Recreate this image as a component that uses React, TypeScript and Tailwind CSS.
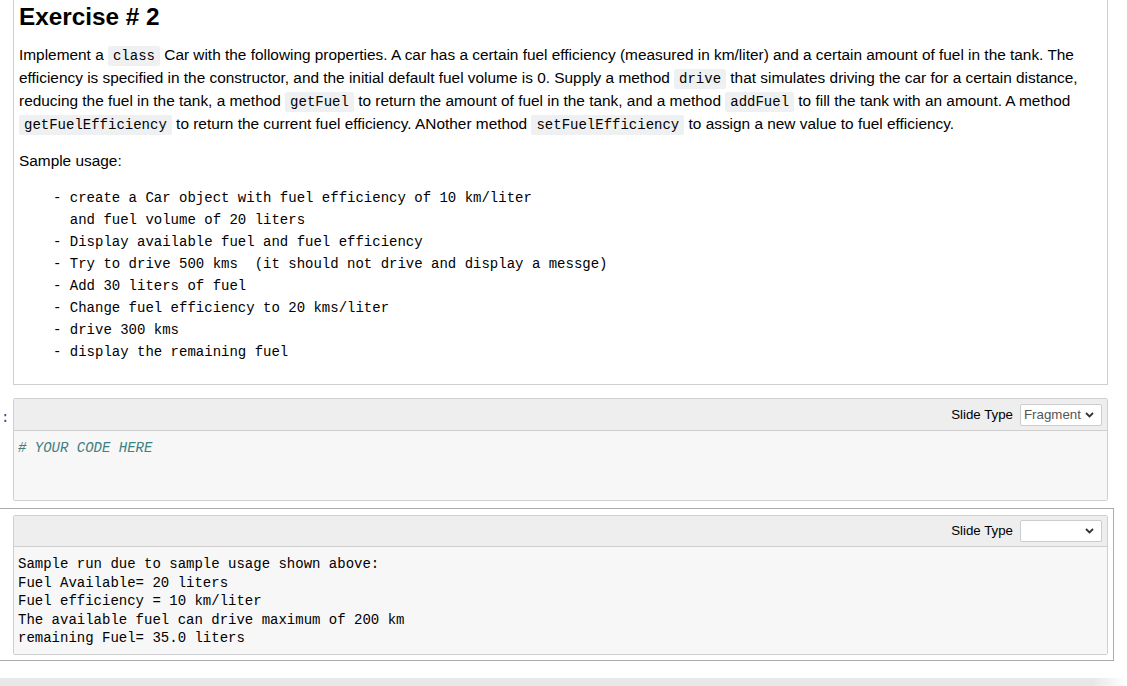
import React from "react";

const mono = "font-['Liberation_Mono','DejaVu_Sans_Mono',monospace]";

function Code({ children }: { children: React.ReactNode }) {
  return (
    <code className={`${mono} rounded-[2px] bg-[#eff0f1] px-[5px] py-[2px] text-[14px]`}>
      {children}
    </code>
  );
}

function SlideType({ value }: { value: string }) {
  return (
    <div className="flex h-full items-center justify-end pr-[5px] text-[13.3px]">
      <span className="mr-[7px] text-black">Slide Type</span>
      <div className="flex h-[22px] w-[82px] items-center justify-between rounded-[2px] border border-[#cccccc] bg-white pl-[3px] pr-[7px] text-[#555555]">
        <span>{value}</span>
        <svg width="9" height="6" viewBox="0 0 9 6" fill="none">
          <path d="M1 1l3.5 3.5L8 1" stroke="#333" strokeWidth="1.8" />
        </svg>
      </div>
    </div>
  );
}

const usage = [
  "- create a Car object with fuel efficiency of 10 km/liter",
  "  and fuel volume of 20 liters",
  "- Display available fuel and fuel efficiency",
  "- Try to drive 500 kms  (it should not drive and display a messge)",
  "- Add 30 liters of fuel",
  "- Change fuel efficiency to 20 kms/liter",
  "- drive 300 kms",
  "- display the remaining fuel",
];

const sampleRun = [
  "Sample run due to sample usage shown above:",
  "Fuel Available= 20 liters",
  "Fuel efficiency = 10 km/liter",
  "The available fuel can drive maximum of 200 km",
  "remaining Fuel= 35.0 liters",
];

export default function App() {
  return (
    <div className="h-[686px] w-[1127px] overflow-hidden bg-white font-['Liberation_Sans',Arial,sans-serif] text-black">
      <div className="pr-[13px]">
        {/* markdown cell */}
        <div className="border-b border-r border-transparent pb-[5px] pl-[13px] pr-[5px]">
          <div className="h-[385px] border-x border-b border-[#cfcfcf] pl-[5px]">
            <h2 className="pt-[4px] text-[24.3px] font-bold leading-[26.4px]">Exercise # 2</h2>
            <p className="mt-[14px] whitespace-nowrap text-[15.4px] leading-[22px]">
              Implement a <Code>class</Code> Car with the following properties. A car has a certain fuel
              efficiency (measured in km/liter) and a certain amount of fuel in the tank. The
              <br />
              efficiency is specified in the constructor, and the initial default fuel volume is 0. Supply a
              method <Code>drive</Code> that simulates driving the car for a certain distance,
              <br />
              reducing the fuel in the tank, a method <Code>getFuel</Code> to return the amount of fuel in
              the tank, and a method <Code>addFuel</Code> to fill the tank with an amount. A method
              <br />
              <Code>getFuelEfficiency</Code> to return the current fuel efficiency. ANother method{" "}
              <Code>setFuelEfficiency</Code> to assign a new value to fuel efficiency.
            </p>
            <p className="mt-[14px] text-[15.4px] leading-[22px]">Sample usage:</p>
            <pre className={`${mono} ml-[34px] mt-[15px] text-[14px] leading-[22px]`}>
              {usage.join("\n")}
            </pre>
          </div>
        </div>

        {/* code cell */}
        <div className="mt-[1px] flex border-y border-r border-transparent pb-[5px] pr-[5px] pt-[5px]">
          <div className="w-[13px] shrink-0 pl-[1px] pt-[7px]">
            <span className={`${mono} text-[14px] leading-[18px] text-[#303f9f]`}>:</span>
          </div>
          <div className="flex-1 rounded-[2px] border border-[#cfcfcf]">
            <div className="h-[32px] border-b border-[#cfcfcf] bg-[#eeeeee]">
              <SlideType value="Fragment" />
            </div>
            <div className="h-[69px] bg-[#f7f7f7] pl-[4px] pt-[8px]">
              <div className={`${mono} text-[14px] italic leading-[18.5px] text-[#408080]`}>
                # YOUR CODE HERE
              </div>
            </div>
          </div>
        </div>

        {/* selected raw cell */}
        <div className="mt-[1px] flex border-y border-r border-[#ababab] pb-[5px] pr-[5px] pt-[6px]">
          <div className="w-[13px] shrink-0" />
          <div className="flex-1 rounded-[2px] border border-[#cfcfcf]">
            <div className="h-[31px] border-b border-[#cfcfcf] bg-[#eeeeee]">
              <SlideType value="" />
            </div>
            <div className="h-[107px] bg-[#f7f7f7] pl-[4px] pt-[8px]">
              <pre className={`${mono} text-[14px] leading-[18.5px] text-black`}>
                {sampleRun.join("\n")}
              </pre>
            </div>
          </div>
        </div>
      </div>

      <div className="mt-[17px] h-[8px] bg-[linear-gradient(to_right,#e8e8e8_97%,#ffffff)]" />
    </div>
  );
}
